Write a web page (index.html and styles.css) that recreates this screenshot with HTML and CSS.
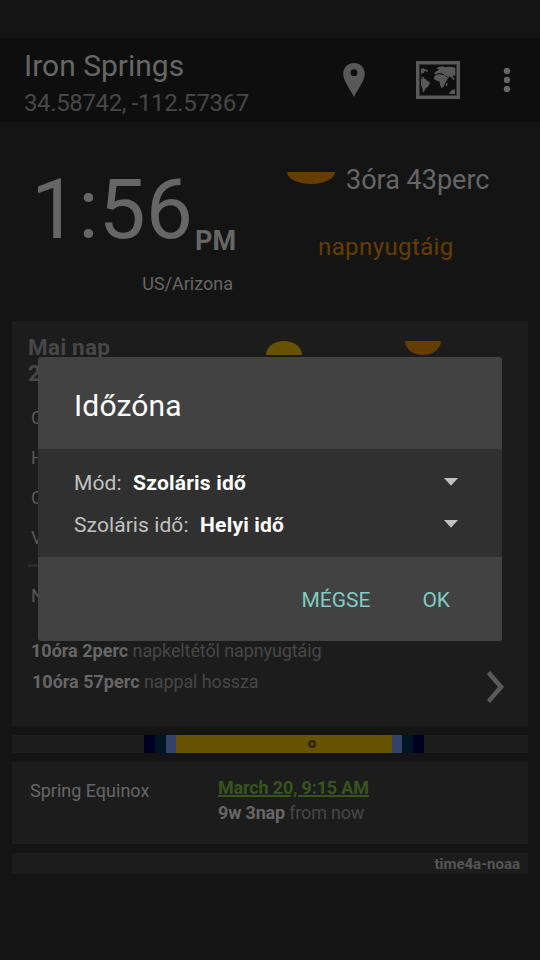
FILE: index.html
```html
<!DOCTYPE html>
<html lang="hu">
<head>
<meta charset="utf-8">
<title>Időzóna</title>
<link rel="stylesheet" href="styles.css">
</head>
<body>
<div class="screen">
  <header class="appbar">
    <div class="place">
      <div class="place-name">Iron Springs</div>
      <div class="place-coords">34.58742, -112.57367</div>
    </div>
    <svg class="icon-pin" viewBox="0 0 22 34" width="22" height="34"><path fill-rule="evenodd" d="M11 0C5 0 .2 4.700 .2 10.600 .2 18 6.500 25 11 34 15.500 25 21.800 18 21.800 10.600 21.800 4.700 17 0 11 0ZM11 6.300a3.400 3.400 0 1 1 0 6.800a3.400 3.400 0 1 1 0-6.800Z"/></svg>
    <svg class="icon-map" viewBox="288 93 132 114" width="44" height="38">
      <path class="map-edge" d="M297 102H411V198H297Z"/>
      <path class="map-frame" d="M292.500 97.500H415.500V202.500H292.500Z"/>
      <path d="M303 117L310 114 316 118 324 121 322 126 315 122 311 129 305 130 303 135ZM304 139L310 141 313 145 306 143ZM303 147L309 144 318 148 323 153 331 158 327 164 324 170 318 174 314 180 312 187 308 185 307 175 303 165Z"/>
      <path d="M344 127L352 122 357 117 349 117 355 111 369 109 375 112 384 110 397 111 406 113V138L401 134 399 142 405 147 401 151 395 143 389 139 384 144 380 138 375 137 372 133 365 130 360 130 354 130 348 133 343 132ZM342 141L348 134 358 133 372 135 379 140 384 145 379 153 375 160 371 170 365 174 360 166 359 155 347 151 342 146ZM378 160L383 158 381 168 377 168ZM387 188L396 181 405 177V192H390Z"/>
    </svg>
    <svg class="icon-more" viewBox="0 0 8 26" width="8" height="26"><circle cx="4" cy="4" r="3.200"/><circle cx="4" cy="13" r="3.200"/><circle cx="4" cy="22" r="3.200"/></svg>
  </header>

  <section class="clock">
    <div class="clock-now">
      <div class="clock-time"><span class="digits">1:56</span><span class="ampm">PM</span></div>
      <div class="zone">US/Arizona</div>
    </div>
    <div class="clock-next">
      <div class="next-row">
        <svg class="sunset" viewBox="0 0 48 12" width="48" height="12"><path d="M0 0H48A24 12 0 0 1 0 0Z"/></svg>
        <span class="next-time">3óra 43perc</span>
      </div>
      <div class="next-label">napnyugtáig</div>
    </div>
  </section>

  <section class="card today">
    <div class="today-head">
      <div class="today-title">Mai nap<br>2014</div>
      <svg class="sunrise" viewBox="0 0 36 14" width="36" height="14"><path d="M0 14A18 14 0 0 1 36 14Z"/></svg>
      <svg class="sunset" viewBox="0 0 36 14" width="36" height="14"><path d="M0 0H36A18 14 0 0 1 0 0Z"/></svg>
    </div>
    <ul class="phases">
      <li>Csill.</li>
      <li>Hajózási</li>
      <li>Civil</li>
      <li>Valós</li>
    </ul>
    <hr class="rule">
    <div class="noon">Nap</div>
    <div class="lengths">
      <div class="length"><b>10óra 2perc</b> napkeltétől napnyugtáig</div>
      <div class="length second"><b>10óra 57perc</b> nappal hossza</div>
      <svg class="chevron" viewBox="0 0 18 34" width="18" height="34"><path d="M2.500 2.500L15 17 2.500 31.500"/></svg>
    </div>
  </section>

  <div class="daybar">
    <i class="night"></i><i class="astro"></i><i class="nautical"></i><i class="civil"></i>
    <i class="day"><svg viewBox="0 0 8 8" width="8" height="8"><circle cx="4" cy="4" r="3.100"/></svg></i>
    <i class="civil"></i><i class="nautical"></i><i class="astro"></i><i class="night"></i>
  </div>

  <section class="card equinox">
    <div class="equinox-name">Spring Equinox</div>
    <div class="equinox-info">
      <div class="equinox-date">March 20, 9:15 AM</div>
      <div class="equinox-left"><b>9w 3nap</b> from now</div>
    </div>
  </section>

  <footer class="source">time4a-noaa</footer>
</div>

<div class="dialog" role="dialog">
  <h1 class="dialog-title">Időzóna</h1>
  <div class="dialog-body">
    <div class="option"><span class="option-name">Mód:</span><b>Szoláris idő</b><svg class="caret" viewBox="0 0 14 8" width="14" height="8"><path d="M0 0H14L7 7.700Z"/></svg></div>
    <div class="option"><span class="option-name">Szoláris idő:</span><b>Helyi idő</b><svg class="caret" viewBox="0 0 14 8" width="14" height="8"><path d="M0 0H14L7 7.700Z"/></svg></div>
  </div>
  <div class="dialog-actions"><span>MÉGSE</span><span>OK</span></div>
</div>
</body>
</html>
```
FILE: styles.css
```css
* { box-sizing: border-box; }
body {
  margin: 0;
  width: 540px;
  height: 960px;
  position: relative;
  overflow: hidden;
  background: #141414;
  color: #666;
  font-family: Roboto, "Liberation Sans", sans-serif;
  font-size: 18px;
  white-space: nowrap;
}
svg { display: block; flex: none; }
.screen { padding-top: 38px; height: 960px; }

.appbar {
  height: 84px;
  padding: 10px 29px 0 24px;
  background: #0e0e0e;
  display: flex;
  align-items: flex-start;
}
.place { flex: 1; }
.place-name { font-size: 30px; line-height: 36px; }
.place-coords { font-size: 24px; line-height: 28px; margin-top: 5px; letter-spacing: -0.370px; color: #474747; }
.icon-pin { margin: 15px 51px 0 0; fill: #585858; }
.icon-map { margin: 13px 43px 0 0; fill: #585858; }
.map-frame { fill: none; stroke: #585858; stroke-width: 9; }
.map-edge { fill: none; stroke: #333; stroke-width: 6; }
.icon-more { margin-top: 19px; fill: #666; }

.clock { height: 199px; display: grid; grid-template-columns: 270px 270px; }
.clock-now { padding: 38px 0 0 31px; }
.clock-time { display: flex; height: 100px; }
.digits { font-size: 84px; line-height: 100px; }
.ampm { font-size: 27px; line-height: 32px; font-weight: 700; margin: 65px 0 0 2px; }
.zone { line-height: 22px; margin: 13px 37px 0 0; text-align: right; }
.clock-next { padding: 41px 0 0 17px; }
.next-row { display: flex; }
.next-row .sunset { margin: 9px 11px 0 0; }
.next-time { font-size: 27px; line-height: 34px; }
.next-label { font-size: 24px; line-height: 30px; margin: 35px 0 0 31px; letter-spacing: 0.400px; color: #663d00; }
.sunset { fill: #663d00; }
.sunrise { fill: #665200; }

.card { margin: 0 12px; background: #1c1c1c; }
.today { height: 405px; padding: 13px 16px 0; }
.today-head { display: flex; align-items: flex-start; height: 71px; color: #474747; }
.today-title { width: 238px; font-size: 22.500px; line-height: 26px; font-weight: 700; letter-spacing: 0.200px; }
.today-head svg { margin-top: 7px; }
.today-head .sunset { margin-left: 103px; }
.phases { list-style: none; margin: 0; padding: 1px 0 0 3px; height: 159px; color: #585858; }
.phases li { height: 40px; line-height: 24px; }
.rule { width: 460px; height: 3px; margin: 0 0 17px; border: 0; background: #2a2a2a; }
.noon { padding-left: 3px; line-height: 24px; height: 55px; color: #585858; }
.lengths { display: grid; grid-template-columns: 455px 18px; grid-template-rows: 31px 31px; padding-left: 3px; }
.length { line-height: 24px; letter-spacing: -0.110px; color: #474747; }
.length b, .equinox-left b { color: #666; }
.length b { letter-spacing: 0; }
.second { padding-left: 1px; grid-row: 2; }
.chevron { grid-column: 2; grid-row: 1 / 3; margin-top: 31px; fill: none; stroke: #5a5a5a; stroke-width: 4.600; }

.daybar { display: flex; height: 18px; margin: 9px 12px; background: #1c1c1c; }
.night { flex: 0 0 auto; width: 132px; }
.night:last-child { width: 104px; }
.astro { width: 11px; background: #000020; }
.nautical { width: 11px; background: #001526; }
.civil { width: 10px; background: #334266; }
.day { width: 216px; padding: 5px 0 0 132px; background: #665200; }
.day circle { fill: #663d00; stroke: #222; stroke-width: 1.800; }

.equinox { height: 82px; display: flex; padding: 13px 0 0 18px; }
.equinox-name { width: 188px; line-height: 24px; padding-top: 4px; }
.equinox-date { line-height: 25px; font-weight: 700; letter-spacing: -0.170px; color: #38541d; text-decoration: underline; text-decoration-thickness: 2px; text-underline-offset: 1px; }
.equinox-left { line-height: 25px; letter-spacing: -0.180px; color: #474747; }
.source { height: 21px; margin: 9px 12px 0; padding-right: 8px; background: #1c1c1c; color: #555; font-size: 15px; line-height: 23px; font-weight: 700; text-align: right; }

.dialog {
  position: absolute;
  left: 38px;
  top: 357px;
  width: 464px;
  height: 284px;
  border-radius: 3px;
  background: #424242;
  color: #fff;
  font-size: 21px;
}
.dialog-title { margin: 0; height: 92px; padding: 31px 36px 0; font-size: 30px; line-height: 36px; font-weight: 400; letter-spacing: 0.150px; }
.dialog-body { height: 108px; padding: 12px 44px 0 36px; background: #303030; }
.option { display: flex; height: 42px; line-height: 44px; }
.option b { letter-spacing: 0.200px; }
.option-name { margin-right: 11.500px; letter-spacing: 0.080px; color: #c1c1c1; }
.caret { margin: 17px 0 0 auto; fill: #c1c1c1; }
.dialog-actions { display: flex; justify-content: flex-end; gap: 52px; padding: 29px 52px 0 0; line-height: 28px; color: #80cbc4; }
```
